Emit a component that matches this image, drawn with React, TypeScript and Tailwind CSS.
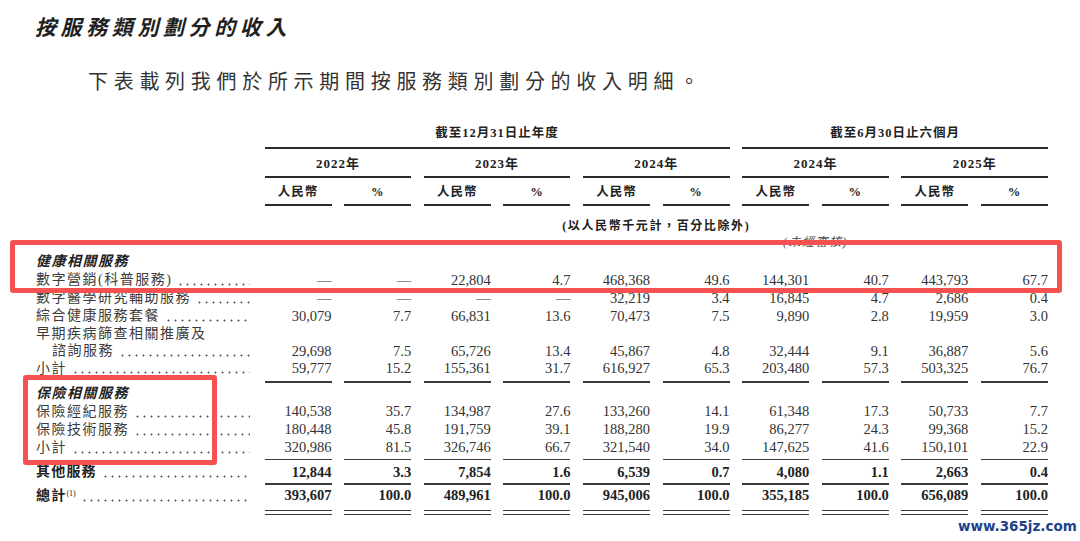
const FONT = "font-['Liberation_Serif','Noto_Sans_CJK_TC',serif]";
const GRID = "grid grid-cols-[216px_repeat(10,67px)] gap-x-[12.6px] pl-[36px]";

type Row = {
  label: string;
  values?: string[];
  dots?: boolean;
  indent?: boolean;
  bold?: boolean;
  heading?: boolean;
  sup?: string;
  h?: string;
};

const health: Row[] = [
  { label: "健康相關服務", heading: true },
  {
    label: "數字營銷(科普服務)",
    dots: true,
    values: ["—", "—", "22,804", "4.7", "468,368", "49.6", "144,301", "40.7", "443,793", "67.7"],
  },
  {
    label: "數字醫學研究輔助服務",
    dots: true,
    values: ["—", "—", "—", "—", "32,219", "3.4", "16,845", "4.7", "2,686", "0.4"],
  },
  {
    label: "綜合健康服務套餐",
    dots: true,
    values: ["30,079", "7.7", "66,831", "13.6", "70,473", "7.5", "9,890", "2.8", "19,959", "3.0"],
  },
  { label: "早期疾病篩查相關推廣及", h: "h-[17px]" },
  {
    label: "諮詢服務",
    indent: true,
    dots: true,
    values: ["29,698", "7.5", "65,726", "13.4", "45,867", "4.8", "32,444", "9.1", "36,887", "5.6"],
  },
  {
    label: "小計",
    dots: true,
    h: "h-[17px]",
    values: ["59,777", "15.2", "155,361", "31.7", "616,927", "65.3", "203,480", "57.3", "503,325", "76.7"],
  },
];

const insurance: Row[] = [
  { label: "保險相關服務", heading: true },
  {
    label: "保險經紀服務",
    dots: true,
    values: ["140,538", "35.7", "134,987", "27.6", "133,260", "14.1", "61,348", "17.3", "50,733", "7.7"],
  },
  {
    label: "保險技術服務",
    dots: true,
    values: ["180,448", "45.8", "191,759", "39.1", "188,280", "19.9", "86,277", "24.3", "99,368", "15.2"],
  },
  {
    label: "小計",
    dots: true,
    values: ["320,986", "81.5", "326,746", "66.7", "321,540", "34.0", "147,625", "41.6", "150,101", "22.9"],
  },
];

const other: Row = {
  label: "其他服務",
  dots: true,
  bold: true,
  values: ["12,844", "3.3", "7,854", "1.6", "6,539", "0.7", "4,080", "1.1", "2,663", "0.4"],
};

const total: Row = {
  label: "總計",
  sup: "(1)",
  dots: true,
  bold: true,
  values: ["393,607", "100.0", "489,961", "100.0", "945,006", "100.0", "355,185", "100.0", "656,089", "100.0"],
};

const TableRow = ({ row }: { row: Row }) => {
  return (
    <div className={`${GRID} ${row.h ?? "h-[18px]"} items-center`}>
      <div className={`flex items-end h-full min-w-0 whitespace-nowrap ${row.indent ? "pl-[16px]" : ""}`}>
        <span
          className={
            row.heading
              ? "self-center text-[14px] italic font-bold tracking-[1.5px] text-[#222] leading-none"
              : row.bold
              ? "self-center text-[14px] font-bold tracking-[1.2px] text-[#222] leading-none"
              : "self-center text-[14px] tracking-[1.5px] text-[#3c3c3c] leading-none"
          }
        >
          {row.label}
          {row.sup && <sup className="text-[8px] font-normal tracking-normal">{row.sup}</sup>}
        </span>
        {row.dots && (
          <span className="flex-1 ml-[5px] mr-[2px] mb-[3px] h-[3px] bg-[radial-gradient(circle,#555_0.8px,transparent_1.2px)] bg-[length:7px_3px] bg-repeat-x" />
        )}
      </div>
      {(row.values ?? Array(10).fill("")).map((v, i) => (
        <div
          key={i}
          className={`text-right text-[14.5px] leading-none ${row.bold ? "font-bold text-[#222]" : "text-[#333]"}`}
        >
          {v}
        </div>
      ))}
    </div>
  );
};

const Rule = ({ mt }: { mt: string }) => (
  <div className={`${GRID} ${mt}`}>
    <div />
    {Array.from({ length: 10 }).map((_, i) => (
      <div key={i} className="h-[1.5px] bg-[#3a3a3a]" />
    ))}
  </div>
);

const App = () => {
  const headerCell = "text-center text-[12.5px] font-bold tracking-[1px] text-[#222] leading-none";
  return (
    <div className={`relative w-[1080px] h-[541px] bg-white overflow-hidden ${FONT}`}>
      <div className="h-[56px] flex items-center pl-[35px]">
        <h1 className="text-[21px] font-bold italic tracking-[4.6px] text-[#1f1f1f] leading-none">
          按服務類別劃分的收入
        </h1>
      </div>
      <div className="h-[52px] flex items-center pl-[88px]">
        <p className="text-[20px] tracking-[5.7px] text-[#333] leading-none">
          下表載列我們於所示期間按服務類別劃分的收入明細。
        </p>
      </div>

      {/* column headers */}
      <div className={`${GRID} mt-[13px] h-[24px] items-center`}>
        <div />
        <div className={`col-span-6 ${headerCell}`}>截至12月31日止年度</div>
        <div className={`col-span-4 ${headerCell}`}>截至6月30日止六個月</div>
      </div>
      <div className={`${GRID} mt-[2px]`}>
        <div />
        <div className="col-span-6 h-[2px] bg-[#2a2a2a]" />
        <div className="col-span-4 h-[2px] bg-[#2a2a2a]" />
      </div>
      <div className={`${GRID} mt-[2px] h-[24px] items-center`}>
        <div />
        {["2022年", "2023年", "2024年", "2024年", "2025年"].map((y, i) => (
          <div key={i} className={`col-span-2 ${headerCell} text-[13px] tracking-[0px]`}>
            {y}
          </div>
        ))}
      </div>
      <div className={`${GRID} mt-[1px]`}>
        <div />
        {Array.from({ length: 5 }).map((_, i) => (
          <div key={i} className="col-span-2 h-[2px] bg-[#2a2a2a]" />
        ))}
      </div>
      <div className={`${GRID} mt-[2px] h-[24px] items-center`}>
        <div />
        {Array.from({ length: 10 }).map((_, i) => (
          <div key={i} className={headerCell}>
            {i % 2 === 0 ? "人民幣" : "%"}
          </div>
        ))}
      </div>
      <div className={GRID}>
        <div />
        {Array.from({ length: 10 }).map((_, i) => (
          <div key={i} className="h-[2px] bg-[#2a2a2a]" />
        ))}
      </div>
      <div className={`${GRID} mt-[10px] h-[20px] items-center`}>
        <div />
        <div className="col-span-10 text-center text-[12px] font-bold tracking-[1.6px] text-[#222] leading-none">
          (以人民幣千元計，百分比除外)
        </div>
      </div>
      <div className={`${GRID} h-[12px] items-start`}>
        <div />
        <div className="col-start-8 col-span-2 text-center text-[12px] italic tracking-[1.5px] text-[#444] leading-none">
          (未經審核)
        </div>
      </div>

      {/* body */}
      <div className="mt-[5px]">
        {health.map((r, i) => (
          <TableRow key={i} row={r} />
        ))}
      </div>
      <Rule mt="mt-[4px]" />
      <div className="mt-[2px]">
        {insurance.map((r, i) => (
          <TableRow key={i} row={r} />
        ))}
      </div>
      <Rule mt="mt-[2px]" />
      <div className="mt-[3px]">
        <TableRow row={other} />
      </div>
      <Rule mt="mt-[2px]" />
      <div className="mt-[2px]">
        <TableRow row={total} />
      </div>
      <Rule mt="mt-[5px]" />
      <Rule mt="mt-[2.5px]" />

      {/* highlight boxes */}
      <div className="absolute left-[10px] top-[240px] w-[1052px] h-[53px] border-[5px] border-[#f55151] rounded-[3px]" />
      <div className="absolute left-[23px] top-[375px] w-[194px] h-[90px] border-[5px] border-[#f55151] rounded-[3px]" />

      {/* watermark */}
      <div className="absolute left-[958px] top-[516px] text-[13.5px] font-bold text-[#1e3f8a] font-['DejaVu_Sans',sans-serif] leading-[20px]">
        www.365jz.com
      </div>
    </div>
  );
};

export default App;
